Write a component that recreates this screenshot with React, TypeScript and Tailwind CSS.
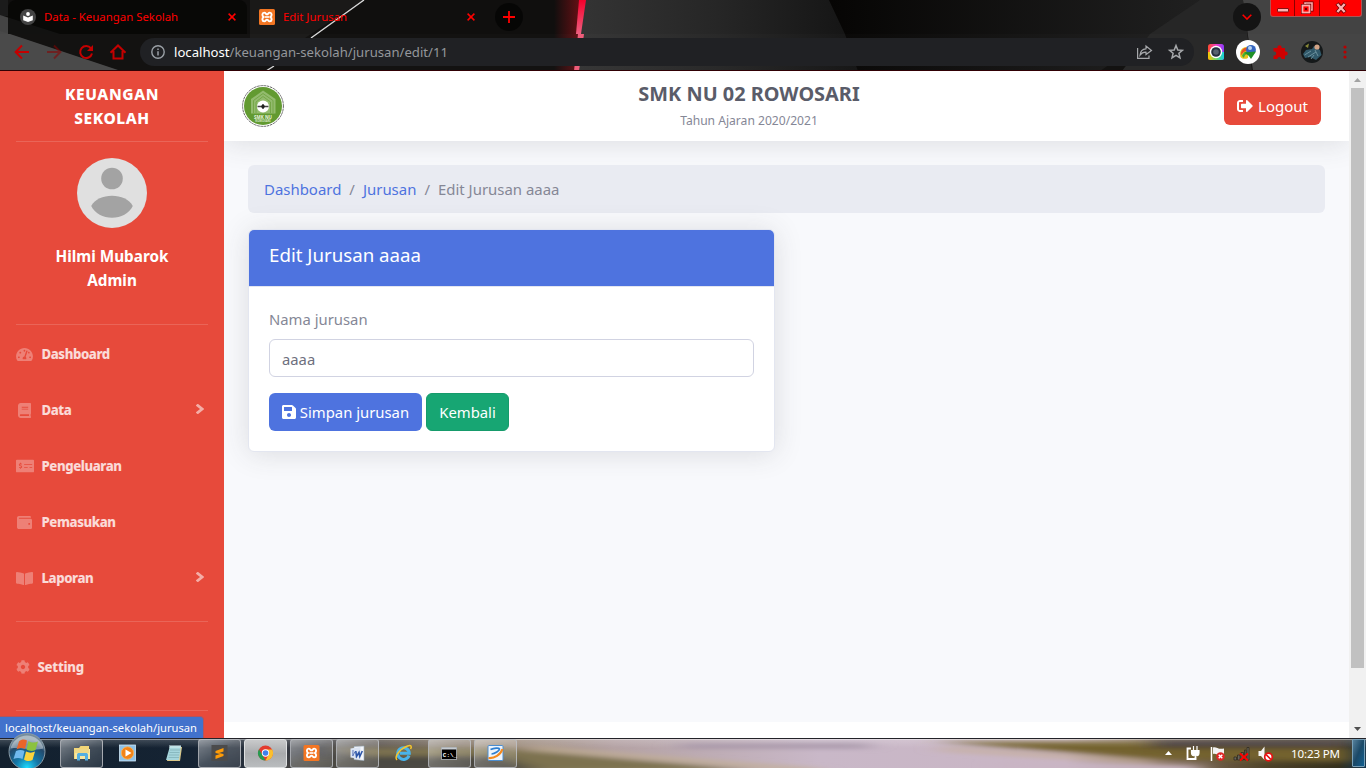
import React from "react";
import {
  FaAngleRight,
  FaBook,
  FaBookOpen,
  FaCog,
  FaMoneyCheckAlt,
  FaSave,
  FaSignOutAlt,
  FaTachometerAlt,
  FaWallet,
} from "react-icons/fa";

function XamppMark() {
  return (
    <>
      <rect width="16" height="16" rx="1.5" fill="#f37623" />
      <path
        d="M5.2 3.6C3 3.6 2.8 6.6 4.6 8C2.8 9.4 3 12.4 5.2 12.4C6.8 12.4 6.8 10.6 8 10.6C9.2 10.6 9.2 12.4 10.8 12.4C13 12.4 13.2 9.4 11.4 8C13.2 6.6 13 3.6 10.8 3.6C9.2 3.6 9.2 5.4 8 5.4C6.8 5.4 6.8 3.6 5.2 3.6Z"
        fill="none"
        stroke="#fff"
        strokeWidth="1.9"
      />
      <path d="M6 8H10" stroke="#fff" strokeWidth="1.6" />
    </>
  );
}

function ThemeBackdrop() {
  return (
    <svg className="absolute inset-0 h-[71px] w-[1366px]" viewBox="0 0 1366 71" preserveAspectRatio="none">
      <defs>
        <linearGradient id="glow" x1="0" x2="1">
          <stop offset="0" stopColor="#a01018" stopOpacity="0" />
          <stop offset="1" stopColor="#a01018" stopOpacity="0.65" />
        </linearGradient>
        <linearGradient id="mid" x1="0" x2="1">
          <stop offset="0" stopColor="#343434" />
          <stop offset="0.5" stopColor="#262626" />
          <stop offset="1" stopColor="#141414" />
        </linearGradient>
        <linearGradient id="right" x1="0" x2="1">
          <stop offset="0" stopColor="#060504" />
          <stop offset="1" stopColor="#202020" />
        </linearGradient>
        <linearGradient id="beam" x1="0" y1="0" x2="0" y2="1">
          <stop offset="0" stopColor="#f5002c" />
          <stop offset="1" stopColor="#ee6080" />
        </linearGradient>
      </defs>
      <rect width="1366" height="71" fill="#100f0e" />
      <path d="M0 0H8V16H0Z" fill="#1b1b1b" />
      <path d="M0 15L60 34H0Z" fill="#444" />
      <path d="M0 31L10 34L118 70H0Z" fill="#484848" />
      <path d="M250 0H363L305 38H250Z" fill="#1a1918" />
      <path d="M364 0L311 38M274 66L266 71" stroke="#d8d8d8" strokeWidth="1.4" />
      <rect x="554" width="28" height="71" fill="url(#glow)" />
      <path d="M583 0H829L845 34L858 71H577Z" fill="url(#mid)" />
      <path d="M579 0H586L581 34H576Z" fill="url(#beam)" />
      <path d="M578 34H584L579 71H574Z" fill="#ee5b78" />
      <path d="M829 0H1202L1100 71H858L845 34Z" fill="url(#right)" />
      <path d="M1200 0H1243L1252 71H1122L1150 34Z" fill="#262626" />
      <path d="M1243 0H1366V71H1253Z" fill="#434343" />
      <rect y="34" width="1366" height="37" fill="#ffffff" fillOpacity="0.015" />
      <rect y="70" width="1366" height="1" fill="#300004" />
    </svg>
  );
}

function CloseX() {
  return (
    <svg viewBox="0 0 8 8" className="h-2 w-2 shrink-0">
      <path d="M0.6 0.6L7.4 7.4M7.4 0.6L0.6 7.4" stroke="#f00" strokeWidth="1.5" />
    </svg>
  );
}

function TabStrip() {
  return (
    <div className="relative flex h-[34px] items-center">
      <div className="ml-2 flex h-full w-[239px] shrink-0 items-center rounded-t-lg bg-[#060605]/80 pl-3">
        <svg viewBox="0 0 16 16" className="h-4 w-4 shrink-0">
          <circle cx="8" cy="8" r="8" fill="#444" />
          <circle cx="8" cy="5" r="1.9" fill="#fff" />
          <path d="M3.2 6.5L8 8.5L12.8 6.5V11.3L8 13L3.2 11.3Z" fill="#fff" />
        </svg>
        <span className="ml-2 w-[184px] text-[11.4px] whitespace-nowrap text-[#f00]">Data - Keuangan Sekolah</span>
        <CloseX />
      </div>
      <div className="flex h-full w-[240px] shrink-0 items-center pl-3">
        <svg viewBox="0 0 16 16" className="h-4 w-4 shrink-0">
          <XamppMark />
        </svg>
        <span className="ml-2 w-[184px] text-[11.4px] whitespace-nowrap text-[#f00]">Edit Jurusan</span>
        <CloseX />
      </div>
      <div className="ml-2 flex h-7 w-7 items-center justify-center rounded-full bg-black/60">
        <svg viewBox="0 0 12 12" className="h-3 w-3">
          <path d="M6 0V12M0 6H12" stroke="#f00" strokeWidth="1.8" />
        </svg>
      </div>
      <div className="ml-auto flex h-7 w-7 items-center justify-center rounded-full bg-[#141414]">
        <svg viewBox="0 0 10 6" className="h-1.5 w-2.5">
          <path d="M0.7 0.7L5 5L9.3 0.7" stroke="#f00" strokeWidth="1.6" fill="none" />
        </svg>
      </div>
      <div className="mr-1 ml-[9px] flex h-[17px] self-start rounded-b-[3px] border border-t-0 border-[#a55] bg-[#f00]">
        <div className="flex w-6 items-center justify-center border-r border-[#800]">
          <svg viewBox="0 0 12 14" className="h-3.5 w-3">
            <rect x="0.5" y="7.5" width="11" height="3.4" rx="0.5" fill="#ffb0b0" stroke="#600" strokeWidth="0.8" />
          </svg>
        </div>
        <div className="flex w-[25px] items-center justify-center border-r border-[#800]">
          <svg viewBox="0 0 14 14" className="h-3.5 w-3.5">
            <path d="M5 4V2H12V9H10" fill="none" stroke="#600" strokeWidth="3" />
            <path d="M5 4V2H12V9H10" fill="none" stroke="#ffa8a8" strokeWidth="1.6" />
            <rect x="2.5" y="4.5" width="7" height="7" fill="#900" stroke="#600" strokeWidth="3" />
            <rect x="2.5" y="4.5" width="7" height="7" fill="#f00" stroke="#ffa8a8" strokeWidth="1.8" />
            <rect x="5" y="7" width="2" height="2" fill="#600" />
          </svg>
        </div>
        <div className="flex w-[41px] items-center justify-center">
          <svg viewBox="0 0 12 12" className="h-3 w-3">
            <path d="M2 1.5L10 10.5M10 1.5L2 10.5" stroke="#600" strokeWidth="4" />
            <path d="M2.3 2L9.7 10M9.7 2L2.3 10" stroke="#ffb0b0" strokeWidth="2.4" />
          </svg>
        </div>
      </div>
    </div>
  );
}

function AddressRow() {
  return (
    <div className="relative flex h-9 items-center">
      <svg viewBox="0 0 140 36" className="h-9 w-[140px] shrink-0" fill="none" strokeWidth="2">
        <path d="M29 18H16M22 11.5L15.6 18L22 24.5" stroke="#c40000" />
        <path d="M47 18H60M54 11.500L60.400 18L54 24.500" stroke="#8a0000" strokeOpacity="0.55" />
        <path d="M91 14.400A6 6 0 1 0 92 19.500" stroke="#c40000" />
        <path d="M93 11V17H87Z" fill="#c40000" />
        <path d="M110.500 18.800L118 11.500L125.500 18.800M113.500 17V24.500H122.500V17" stroke="#c40000" />
      </svg>
      <div className="flex h-7 w-[1054px] shrink-0 items-center rounded-full bg-[#202124] pl-[11px]">
        <svg viewBox="0 0 14 14" className="h-3.5 w-3.5" fill="none">
          <circle cx="7" cy="7" r="6.2" stroke="#9aa0a6" strokeWidth="1.4" />
          <path d="M7 6.2V10.4M7 3.6V5" stroke="#9aa0a6" strokeWidth="1.5" />
        </svg>
        <span className="ml-[9px] pt-px text-[13.150px] whitespace-nowrap text-[#94979b]">
          <span className="text-white">localhost</span>/keuangan-sekolah/jurusan/edit/11
        </span>
        <svg viewBox="0 0 50 18" className="mr-[10px] ml-auto h-[18px] w-[50px]" fill="none" stroke="#a6a8ab" strokeWidth="1.2">
          <path d="M3.6 5V15.4H15V12.5" />
          <path d="M6 12.2C6.3 8.4 8.6 6 12 5.8V3L17.5 7.5L12 11.6V9.2C9.5 9 7.6 10 6 12.2Z" />
          <path d="M42 2.6L43.8 7L48.4 7.3L44.9 10.3L46 14.9L42 12.4L38 14.9L39.1 10.3L35.6 7.3L40.2 7Z" strokeWidth="1.5" />
        </svg>
      </div>
      <svg viewBox="0 0 172 36" className="h-9 w-[172px] shrink-0">
        <defs>
          <linearGradient id="camTop" x1="0" x2="1">
            <stop offset="0" stopColor="#ff4a2e" />
            <stop offset="0.5" stopColor="#f03cc0" />
            <stop offset="1" stopColor="#8a3cff" />
          </linearGradient>
          <linearGradient id="camBottom" x1="0" x2="1">
            <stop offset="0" stopColor="#ffc400" />
            <stop offset="0.5" stopColor="#6fd96a" />
            <stop offset="1" stopColor="#12d0e0" />
          </linearGradient>
        </defs>
        <rect x="14" y="10" width="16" height="16" rx="2.500" fill="url(#camTop)" />
        <path d="M14 18H30V23.500Q30 26 27.500 26H16.500Q14 26 14 23.500Z" fill="url(#camBottom)" />
        <circle cx="22" cy="18" r="6.200" fill="#fff" />
        <circle cx="22" cy="18" r="4.800" fill="#243040" />
        <circle cx="22" cy="18" r="2.800" fill="#566270" />
        <circle cx="54" cy="18" r="12" fill="#fff" />
        <path d="M46.500 23C44.500 15.500 50 11.500 55 13.500L54 24C51 25.500 48 25 46.500 23Z" fill="#e8c520" />
        <path d="M47 19C47.500 15 51 13 54 14V17C51 16.500 48.500 18 47.500 21.500Z" fill="#e85025" />
        <path d="M48 22C49 18.500 51.500 17 55 17.500V20C52 19.500 50.500 21 50 24Z" fill="#48ae35" />
        <circle cx="57" cy="15.800" r="4.900" fill="#3566c0" />
        <circle cx="56" cy="14" r="2" fill="#b8d4f0" />
        <path d="M50 18.500L62 17.500L57 25L54.500 21.500Z" fill="#1f9128" />
        <path transform="translate(6 -0.500)" d="M73.500 14.500H77.500A2.100 2.100 0 1 1 81.500 14.500H85V18A2.100 2.100 0 1 1 85 22V25.500H81.500A2.100 2.100 0 1 0 77.300 25.500H73.500V22A2.100 2.100 0 1 0 73.500 18Z" fill="#d00000" />
        <circle cx="118" cy="18" r="11" fill="#15191a" />
        <path d="M109 20L112 16L118 15L120 12L126 16L127.500 21L122 26L116 23L111 24Z" fill="#31596a" />
        <path d="M110.500 21L117 17M114 23L122 18M121 16L124 22M117 25L120 21" stroke="#7196a3" strokeWidth="0.9" />
        <path d="M111 12L115 9.500L114 14Z" fill="#8b8b38" />
        <circle cx="123" cy="13" r="2.600" fill="#d1a386" />
        <g fill="#b80000">
          <circle cx="151" cy="13" r="1.600" />
          <circle cx="151" cy="18" r="1.600" />
          <circle cx="151" cy="23" r="1.600" />
        </g>
      </svg>
    </div>
  );
}

type NavProps = { icon: React.ReactNode; label: string; arrow?: boolean };

function NavItem({ icon, label, arrow }: NavProps) {
  return (
    <div className="flex h-14 items-center px-4">
      <span className="flex w-[17px] shrink-0 justify-center text-white/30">{icon}</span>
      <span className="ml-[8.500px] pt-px text-[13.200px] font-extrabold tracking-[-0.420px] text-white/80">{label}</span>
      {arrow && <FaAngleRight className="mr-[3px] mb-0.5 ml-auto h-4 w-[10px] text-white/55" preserveAspectRatio="none" />}
    </div>
  );
}

function Sidebar() {
  return (
    <aside className="w-[224px] shrink-0 overflow-hidden bg-[#e74a3b] text-white">
      <div className="flex h-[70px] items-center justify-center text-center text-[15.500px] leading-6 font-extrabold tracking-[0.600px]">
        <span>
          KEUANGAN
          <br />
          SEKOLAH
        </span>
      </div>
      <div className="mx-4 h-px bg-white/15" />
      <svg viewBox="0 0 70 70" className="mx-auto mt-4 h-[70px] w-[70px]">
        <circle cx="35" cy="35" r="35" fill="#e0e0e0" />
        <circle cx="35" cy="20.500" r="10.800" fill="#a3a3a3" />
        <path d="M14.200 48C18 41 26 37.700 35 37.700S52 41 55.800 48C52 55.500 44 59.700 35 59.700S18 55.500 14.200 48Z" fill="#a3a3a3" />
      </svg>
      <div className="mt-4 text-center text-[15.300px] leading-6 font-bold">
        Hilmi Mubarok
        <br />
        Admin
      </div>
      <div className="mx-4 mt-8 mb-[1px] h-px bg-white/15" />
      <NavItem icon={<FaTachometerAlt className="h-[15px] w-[17px]" />} label="Dashboard" />
      <NavItem icon={<FaBook className="h-[15px] w-[13px]" />} label="Data" arrow />
      <NavItem icon={<FaMoneyCheckAlt className="h-[18px] w-[18px] shrink-0" />} label="Pengeluaran" />
      <NavItem icon={<FaWallet className="h-[15px] w-[15px]" />} label="Pemasukan" />
      <NavItem icon={<FaBookOpen className="h-[17px] w-[17px]" />} label="Laporan" arrow />
      <div className="mx-4 mt-[15px] h-px bg-white/15" />
      <div className="mt-4 flex h-[58px] items-center px-4">
        <FaCog className="h-[14px] w-[14px] text-white/30" />
        <span className="ml-[7.500px] pt-px text-[13.200px] font-extrabold tracking-[-0.300px] text-white/80">Setting</span>
      </div>
      <div className="mx-4 mt-[14px] h-px bg-white/15" />
    </aside>
  );
}

function SchoolLogo() {
  return (
    <svg viewBox="0 0 42 42" className="h-[42px] w-[42px]">
      <circle cx="21" cy="21" r="20.400" fill="#fff" stroke="#666" strokeWidth="1" strokeDasharray="2.500 0.700" />
      <circle cx="21" cy="21" r="19" fill="#629a31" />
      <path d="M9 28.500V14L21 5.500L33.500 14V28.500Z" fill="#93bb6e" />
      <path d="M11.500 28V15.500L21 8.500L31 15.500V28M14 28V17L21 11.500L28.500 17V28" fill="none" stroke="#6da13e" strokeWidth="0.8" />
      <circle cx="21" cy="21.500" r="6" fill="#fff" />
      <path d="M15.500 21.500H26.500M21 19V24" stroke="#444" strokeWidth="1.500" />
      <circle cx="21" cy="21.500" r="1.800" fill="#222" />
      <text x="21" y="33.500" fontSize="4.500" fontWeight="bold" textAnchor="middle" fill="#e8f2de">SMK NU</text>
      <text x="21" y="36.500" fontSize="2.800" fontWeight="bold" textAnchor="middle" fill="#d5e6c5">ROWOSARI</text>
    </svg>
  );
}

function Content() {
  return (
    <main className="flex min-w-0 flex-1 flex-col overflow-hidden bg-white text-[#858796]">
      <div className="h-[651px] shrink-0 bg-[#f8f9fc]">
        <header className="grid h-[70px] grid-cols-[42px_930px_107px] items-center bg-white pl-[18px] shadow-[0_2px_28px_0_rgba(58,59,69,0.15)]">
          <SchoolLogo />
          <div className="text-center">
            <h1 className="text-[19.900px] leading-6 font-bold whitespace-nowrap text-[#5a5c69]">SMK NU 02 ROWOSARI</h1>
            <p className="mt-[6px] text-[12.100px] leading-[18px]">Tahun Ajaran 2020/2021</p>
          </div>
          <button className="flex h-[38px] w-[97px] items-center justify-center gap-[5px] justify-self-end rounded-md bg-[#e74a3b] text-[15px] text-white">
            <FaSignOutAlt className="h-4 w-4" />
            Logout
          </button>
        </header>
        <div className="px-6 pt-6">
          <nav className="flex h-12 items-center gap-2 rounded-md bg-[#e9ebf2] px-4 text-[14.950px]">
            <a className="text-[#4e73df]">Dashboard</a>
            <span>/</span>
            <a className="text-[#4e73df]">Jurusan</a>
            <span>/</span>
            <span>Edit Jurusan aaaa</span>
          </nav>
          <section className="mt-4 h-[223px] w-[527px] rounded-md border border-[#e3e6f0] bg-white shadow-[0_2px_28px_0_rgba(58,59,69,0.15)]">
            <div className="h-[57px] rounded-t-[5px] border-b border-[#e3e6f0] bg-[#4e73df] px-5 pt-[13px] text-[18.700px] leading-6 text-white">
              Edit Jurusan aaaa
            </div>
            <div className="p-5">
              <label className="block text-[14.850px] leading-6">Nama jurusan</label>
              <input
                readOnly
                value="aaaa"
                className="mt-2 block h-[38px] w-full rounded-md border border-[#d1d3e2] bg-white px-3 pt-0.5 text-[14.800px] text-[#6e707e]"
              />
              <div className="mt-4 flex gap-1 text-[14.850px] text-white">
                <button className="flex h-[38px] w-[153px] items-center justify-center gap-1 rounded-md bg-[#4e73df] whitespace-nowrap">
                  <FaSave className="h-4 w-[14px]" />
                  Simpan jurusan
                </button>
                <button className="h-[38px] w-[83px] rounded-md border border-[#169b6b] bg-[#17a673]">Kembali</button>
              </div>
            </div>
          </section>
        </div>
      </div>
    </main>
  );
}

function Scrollbar() {
  return (
    <div className="flex w-[17px] shrink-0 flex-col items-center bg-[#f1f1f1]">
      <svg viewBox="0 0 17 17" className="h-[17px] w-[17px]">
        <path d="M5 11H12L8.500 7Z" fill="#a3a3a3" />
      </svg>
      <div className="h-[580px] w-[13px] bg-[#c1c1c1]" />
      <svg viewBox="0 0 17 17" className="mt-auto h-[17px] w-[17px]">
        <path d="M5 6H12L8.500 10Z" fill="#505050" />
      </svg>
    </div>
  );
}

function TaskButton({ children, kind }: { children: React.ReactNode; kind: "plain" | "open" | "active" }) {
  const look =
    kind === "active"
      ? "border border-[#dfe1e2] bg-linear-to-b from-[#c9cacb] via-[#a9abad] to-[#b9bcbe]"
      : kind === "open"
        ? "border border-[#b9bcc0]/80 bg-linear-to-br from-white/45 via-white/20 to-white/10"
        : "";
  return (
    <div className={"mr-[3px] flex h-[29px] w-[43px] shrink-0 items-center justify-center rounded-[3px] " + look}>
      <svg viewBox="0 0 16 16" className="h-4 w-4 overflow-visible">
        {children}
      </svg>
    </div>
  );
}

function TaskbarBackdrop() {
  return (
    <svg viewBox="0 0 1366 30" preserveAspectRatio="none" className="absolute inset-0 h-[30px] w-full">
      <defs>
        <linearGradient id="base" x1="0" x2="1">
          <stop offset="0" stopColor="#13212f" />
          <stop offset="0.14" stopColor="#152333" />
          <stop offset="0.22" stopColor="#3a3d44" />
          <stop offset="0.3" stopColor="#6d6358" />
          <stop offset="0.37" stopColor="#9b8b7b" />
          <stop offset="0.45" stopColor="#b4a2a4" />
          <stop offset="0.6" stopColor="#c9b8c8" />
          <stop offset="0.78" stopColor="#c9b5c4" />
          <stop offset="0.85" stopColor="#8a7560" />
          <stop offset="0.93" stopColor="#4c4128" />
          <stop offset="0.98" stopColor="#35301f" />
          <stop offset="1" stopColor="#13354f" />
        </linearGradient>
        <linearGradient id="edge" x1="0" x2="0" y1="0" y2="1">
          <stop offset="0" stopColor="#fff" stopOpacity="0.22" />
          <stop offset="1" stopColor="#fff" stopOpacity="0" />
        </linearGradient>
        <filter id="soft" x="-10%" y="-80%" width="120%" height="260%">
          <feGaussianBlur stdDeviation="12 2.500" />
        </filter>
      </defs>
      <rect width="1366" height="30" fill="url(#base)" />
      <g filter="url(#soft)">
        <path d="M330 10H500L760 33H440Z" fill="#7d7250" />
        <path d="M300 18H500L540 33H280Z" fill="#4b4a42" />
        <path d="M530 10L820 33" stroke="#c2af95" strokeWidth="4" />
        <path d="M680 5H870V10H680Z" fill="#a393a5" />
        <path d="M930 3H1350V24L1150 21Z" fill="#73622f" />
        <path d="M1150 1H1350V10H1150Z" fill="#453b38" />
        <path d="M940 11L1150 24" stroke="#c5ad94" strokeWidth="3" />
        <path d="M1000 27L1200 31" stroke="#c9b5c4" strokeWidth="7" />
      </g>
      <rect width="1366" height="10" fill="url(#edge)" />
      <rect width="1366" height="1" fill="#232329" />
      <rect y="1" width="1366" height="1" fill="#fff" fillOpacity="0.4" />
    </svg>
  );
}

function Taskbar() {
  return (
    <footer className="relative h-[30px] shrink-0">
      <TaskbarBackdrop />
      <svg viewBox="0 0 40 36" className="absolute -top-[5px] left-[7px] h-9 w-10">
        <defs>
          <radialGradient id="orb" cx="0.5" cy="0.95" r="0.8">
            <stop offset="0" stopColor="#20dcff" />
            <stop offset="0.4" stopColor="#1478a8" />
            <stop offset="0.8" stopColor="#234a6c" />
            <stop offset="1" stopColor="#768c9b" />
          </radialGradient>
        </defs>
        <circle cx="20" cy="18.500" r="18" fill="url(#orb)" stroke="#8799a5" strokeWidth="1" />
        <path d="M3.500 15.500A17 17 0 0 1 36.500 15.500C26 18.500 14 13.500 3.500 15.500Z" fill="#fff" fillOpacity="0.4" />
        <path d="M12 8.500C14.500 6 17.500 6 20 7.500L18 16C15 14.500 12.500 15 9.500 16.500Z" fill="#e9652a" />
        <path d="M21.500 8C24.500 10 28 10 31 8.500L28.500 17C25 18.500 22 18 19.500 16.500Z" fill="#8bc23f" />
        <path d="M9 18C12 16.500 15 16.500 17.500 18L15.500 26C12.500 24.500 9.500 24.500 6.500 26Z" fill="#70b9ee" />
        <path d="M19 18.500C22 20 25 20 28 18.500L25.500 27C23 28.500 19.500 28.500 17 26.500Z" fill="#fbd33c" />
      </svg>
      <div className="relative flex h-full items-center pl-[60px]">
        <TaskButton kind="open">
          <path d="M0 3H5L6.500 1H15V14H0Z" fill="#f3d777" />
          <path d="M1 4H16V14H1Z" fill="#f8e7a1" />
          <path d="M1 5H15M1 7H15" stroke="#ddbd56" strokeWidth="0.7" />
          <path d="M3 15.500V10C3 8.500 4 8 5 8H12C13 8 14 8.500 14 10V15.500H11V11H6V15.500Z" fill="#54afe1" />
        </TaskButton>
        <TaskButton kind="plain">
          <rect x="-0.500" width="16" height="16" fill="#8ec2e8" stroke="#cfe6f6" strokeWidth="0.8" />
          <circle cx="7.500" cy="8" r="6.200" fill="#f38418" stroke="#fbb85e" strokeWidth="0.8" />
          <path d="M5.500 4.500L11.500 8L5.500 11.500Z" fill="#fff" />
        </TaskButton>
        <TaskButton kind="plain">
          <path d="M4 2H16L14 16H1Z" fill="#d9c789" />
          <path d="M4 1H15L13 15H0Z" fill="#a5d5dc" />
          <path d="M4 5H14M3.500 7.500H13.500M3 10H13M2.500 12.500H13" stroke="#76a6ad" strokeWidth="0.6" />
          <path d="M4 0V3M6 0V3M8 0V3M10 0V3M12 0V3M14 0V3" stroke="#d9eff2" strokeWidth="1" />
        </TaskButton>
        <TaskButton kind="open">
          <rect x="-0.500" width="16" height="16" fill="#4b4b4b" />
          <path d="M3.500 6L11.500 3V6.500L7 8L11.500 9V11L3.500 14V10.500L8 9L3.500 8Z" fill="#ff9c07" />
        </TaskButton>
        <TaskButton kind="active">
          <g transform="translate(-0.500 0)">
            <circle cx="8" cy="8" r="7.500" fill="#e33b2e" />
            <path d="M1.500 4.200L6 12L8 15.500A7.500 7.500 0 0 1 1.500 4.200Z" fill="#259b50" />
            <path d="M8 15.500L12 8L9 4.500H14.700A7.500 7.500 0 0 1 8 15.500Z" fill="#fbc02d" />
            <circle cx="8" cy="8" r="3.700" fill="#fff" />
            <circle cx="8" cy="8" r="2.800" fill="#3f80eb" />
          </g>
        </TaskButton>
        <TaskButton kind="open">
          <g transform="translate(-0.500 0)">
            <XamppMark />
          </g>
        </TaskButton>
        <TaskButton kind="open">
          <path d="M4 1.500L14 1V15.500L4 14.500Z" fill="#f4f6fa" stroke="#9ab" strokeWidth="0.600" />
          <path d="M0.500 3.500L10.500 2V14L0.500 12.500Z" fill="#dce5f4" />
          <path d="M3 5L2.800 11L5 6.500" fill="none" stroke="#5e79ba" strokeWidth="1" />
          <path d="M5.800 6L6.500 11.500L9 7.500L9.800 11.500L12.300 6" fill="none" stroke="#2c55a8" strokeWidth="1.600" />
        </TaskButton>
        <TaskButton kind="plain">
          <path d="M13 10.500A5.800 5.800 0 1 1 13.300 8.300H4" fill="none" stroke="#49b4ea" strokeWidth="3" />
          <path d="M1 15C-2 12 3.500 4 11.500 1C15.500 -0.500 16 2 14.500 4" fill="none" stroke="#f5c52c" strokeWidth="1.500" />
        </TaskButton>
        <TaskButton kind="open">
          <rect x="-0.500" y="2.500" width="15" height="12" fill="#000" stroke="#9aa0a4" />
          <path d="M-0.500 3.500H14.500" stroke="#c6cbd0" strokeWidth="2" />
          <text x="0.800" y="11.500" fontSize="6" fontWeight="bold" fill="#fff" className="font-['Liberation_Mono']">C:\_</text>
        </TaskButton>
        <TaskButton kind="open">
          <rect x="0" y="0.500" width="15" height="15" rx="1" fill="#eef5fc" stroke="#4c8ed0" />
          <path d="M2.500 4.500C6 3 11 2.500 11.500 4C11.500 5.500 7 9 3.500 9" stroke="#2f7fd0" strokeWidth="1.700" fill="none" />
          <path d="M0.500 13C6.500 13.500 12.500 10 14.500 4" stroke="#f48a1f" strokeWidth="2.200" fill="none" />
        </TaskButton>
        <svg viewBox="0 0 120 20" className="ml-auto h-5 w-[120px] shrink-0">
          <path d="M5 12H12L8.500 8Z" fill="#fff" />
          <path d="M31 5.500H27.500V16H35.500V14" fill="none" stroke="#fff" strokeWidth="1.800" />
          <path d="M31.500 7.500H39V10C39 12 37.500 13 35.500 13S31.500 12 31.500 10ZM33.500 3V7M37 3V7M35.500 13V17" fill="#fff" stroke="#fff" strokeWidth="1.200" />
          <path d="M51.500 4V18" stroke="#fff" strokeWidth="1.500" />
          <path d="M53 4.500C56 3 58 7 64 5.500V12C58 13 56 10 53 11Z" fill="#f2f2f2" />
          <circle cx="60.500" cy="13.500" r="4.300" fill="#e02525" />
          <path d="M58.700 11.700L62.300 15.300M62.300 11.700L58.700 15.300" stroke="#fff" strokeWidth="1.400" />
          <path d="M74 17V14H76.500V17ZM77.500 17V12H80V17ZM81 17V9.500H83.500V17ZM84.500 17V7H86V17ZM87 17V4.500H89V17Z" fill="#69645a" stroke="#28251d" strokeWidth="0.700" />
          <path d="M80 10.500L88 17.500M88 10.500L80 17.500" stroke="#f00" strokeWidth="1.900" />
          <path d="M98.500 8H101L104.500 3.500V17L101 13H98.500Z" fill="#f6f6f6" />
          <circle cx="108.500" cy="14" r="3.800" fill="#fff" stroke="#e81010" strokeWidth="1.700" />
          <path d="M106 11.500L111 16.500" stroke="#e81010" strokeWidth="1.700" />
        </svg>
        <span className="ml-[11px] w-[61px] pt-px text-[11.600px] tracking-[-0.150px] whitespace-nowrap text-white">10:23 PM</span>
        <div className="mr-[1px] h-7 w-[13px] rounded-[1px] border border-[#78a0b8] bg-linear-to-br from-[#55809b] via-[#1b4967] to-[#0e5f91]" />
      </div>
    </footer>
  );
}

export default function App() {
  return (
    <div className="flex h-[768px] w-[1366px] flex-col overflow-hidden bg-white font-['Noto_Sans','Open_Sans',sans-serif]">
      <div className="relative h-[71px] shrink-0">
        <ThemeBackdrop />
        <TabStrip />
        <AddressRow />
      </div>
      <div className="relative flex h-[667px] shrink-0">
        <Sidebar />
        <Content />
        <Scrollbar />
        <div className="absolute bottom-0 left-0 flex h-[22px] w-[204px] items-center rounded-tr border-t border-r border-[#b4545c] bg-[#4272cc] pt-px pl-[5px] text-[11.200px] whitespace-nowrap text-white">
          localhost/keuangan-sekolah/jurusan
        </div>
      </div>
      <Taskbar />
    </div>
  );
}
